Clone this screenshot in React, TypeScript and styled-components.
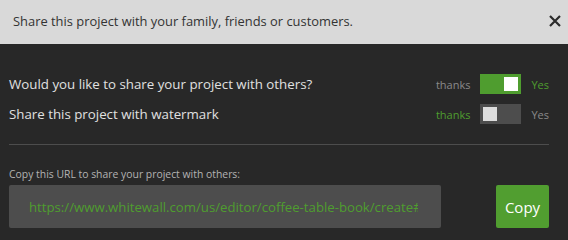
import styled, { createGlobalStyle } from "styled-components";
import { useState } from "react";

const GlobalStyle = createGlobalStyle`
  html, body {
    margin: 0;
    padding: 0;
    background: #282828;
    font-family: "Open Sans", "Noto Sans", sans-serif;
  }
`;

const URL = "https://www.whitewall.com/us/editor/coffee-table-book/create#";

const App = () => {
  const [shareOn, setShareOn] = useState(true);
  const [watermarkOn, setWatermarkOn] = useState(false);

  return (
    <>
      <GlobalStyle />
      <Dialog>
        <Header>
          <Title>Share this project with your family, friends or customers.</Title>
          <CloseButton aria-label="close">
            <svg width="12" height="12" viewBox="0 0 12 12">
              <path d="M1 1 L11 11 M11 1 L1 11" stroke="#2b2b2b" strokeWidth="2.2" />
            </svg>
          </CloseButton>
        </Header>
        <Body>
          <OptionRow>
            <OptionLabel>Would you like to share your project with others?</OptionLabel>
            <SwitchGroup>
              <SideText $active={!shareOn}>thanks</SideText>
              <Switch $on={shareOn} onClick={() => setShareOn(!shareOn)}>
                <Knob $on={shareOn} />
              </Switch>
              <SideText $active={shareOn}>Yes</SideText>
            </SwitchGroup>
          </OptionRow>
          <OptionRow>
            <OptionLabel>Share this project with watermark</OptionLabel>
            <SwitchGroup>
              <SideText $active={!watermarkOn}>thanks</SideText>
              <Switch $on={watermarkOn} onClick={() => setWatermarkOn(!watermarkOn)}>
                <Knob $on={watermarkOn} />
              </Switch>
              <SideText $active={watermarkOn}>Yes</SideText>
            </SwitchGroup>
          </OptionRow>
          <Divider />
          <UrlLabel>Copy this URL to share your project with others:</UrlLabel>
          <UrlRow>
            <UrlBox>
              <UrlText>{URL}</UrlText>
            </UrlBox>
            <CopyButton>Copy</CopyButton>
          </UrlRow>
        </Body>
      </Dialog>
    </>
  );
};

const Dialog = styled.div`
  width: 568px;
  height: 240px;
  display: flex;
  flex-direction: column;
  background: #282828;
  overflow: hidden;
`;

const Header = styled.div`
  height: 44px;
  flex: none;
  box-sizing: border-box;
  display: flex;
  align-items: center;
  justify-content: space-between;
  padding: 0 7px 3px 13px;
  background: #d9d9d9;
`;

const Title = styled.span`
  font-size: 12.9px;
  line-height: 18px;
  color: #333333;
`;

const CloseButton = styled.div`
  width: 12px;
  height: 12px;
  display: flex;
`;

const Body = styled.div`
  padding: 30px 19px 0 9px;
  display: flex;
  flex-direction: column;
`;

const OptionRow = styled.div`
  height: 20px;
  display: flex;
  align-items: center;
  justify-content: space-between;
  & + & {
    margin-top: 10px;
  }
`;

const OptionLabel = styled.span`
  font-size: 13.3px;
  color: #e0e0e0;
`;

const SwitchGroup = styled.div`
  display: flex;
  align-items: center;
`;

const SideText = styled.span<{ $active: boolean }>`
  font-size: 11px;
  color: ${(p) => (p.$active ? "#4f9d2f" : "#8a8a8a")};
  &:first-child {
    margin-right: 10px;
  }
  &:last-child {
    margin-left: 10px;
  }
`;

const Switch = styled.div<{ $on: boolean }>`
  width: 41px;
  height: 20px;
  box-sizing: border-box;
  padding: 3px;
  display: flex;
  justify-content: ${(p) => (p.$on ? "flex-end" : "flex-start")};
  background: ${(p) => (p.$on ? "#4f9d2f" : "#4d4d4d")};
  cursor: pointer;
`;

const Knob = styled.div<{ $on: boolean }>`
  width: 14px;
  height: 14px;
  background: ${(p) => (p.$on ? "#ffffff" : "#dddddd")};
`;

const Divider = styled.div`
  height: 1px;
  background: #4d4d4d;
  margin: 20px 0 0;
`;

const UrlLabel = styled.div`
  margin-top: 21px;
  font-size: 10.4px;
  line-height: 16px;
  color: #b3b3b3;
`;

const UrlRow = styled.div`
  margin-top: 3px;
  display: flex;
  justify-content: space-between;
`;

const UrlBox = styled.div`
  width: 432px;
  height: 43px;
  box-sizing: border-box;
  padding: 0 0 0 20px;
  display: flex;
  align-items: center;
  background: #4d4d4d;
  border-radius: 2px;
  overflow: hidden;
`;

const UrlText = styled.span`
  width: 389px;
  font-size: 13.2px;
  color: #4f9d2f;
  white-space: nowrap;
  overflow: hidden;
`;

const CopyButton = styled.button`
  width: 53px;
  height: 43px;
  border: none;
  border-radius: 2px;
  background: #519e30;
  color: #ffffff;
  font-family: inherit;
  font-size: 15px;
  cursor: pointer;
`;

export default App;
